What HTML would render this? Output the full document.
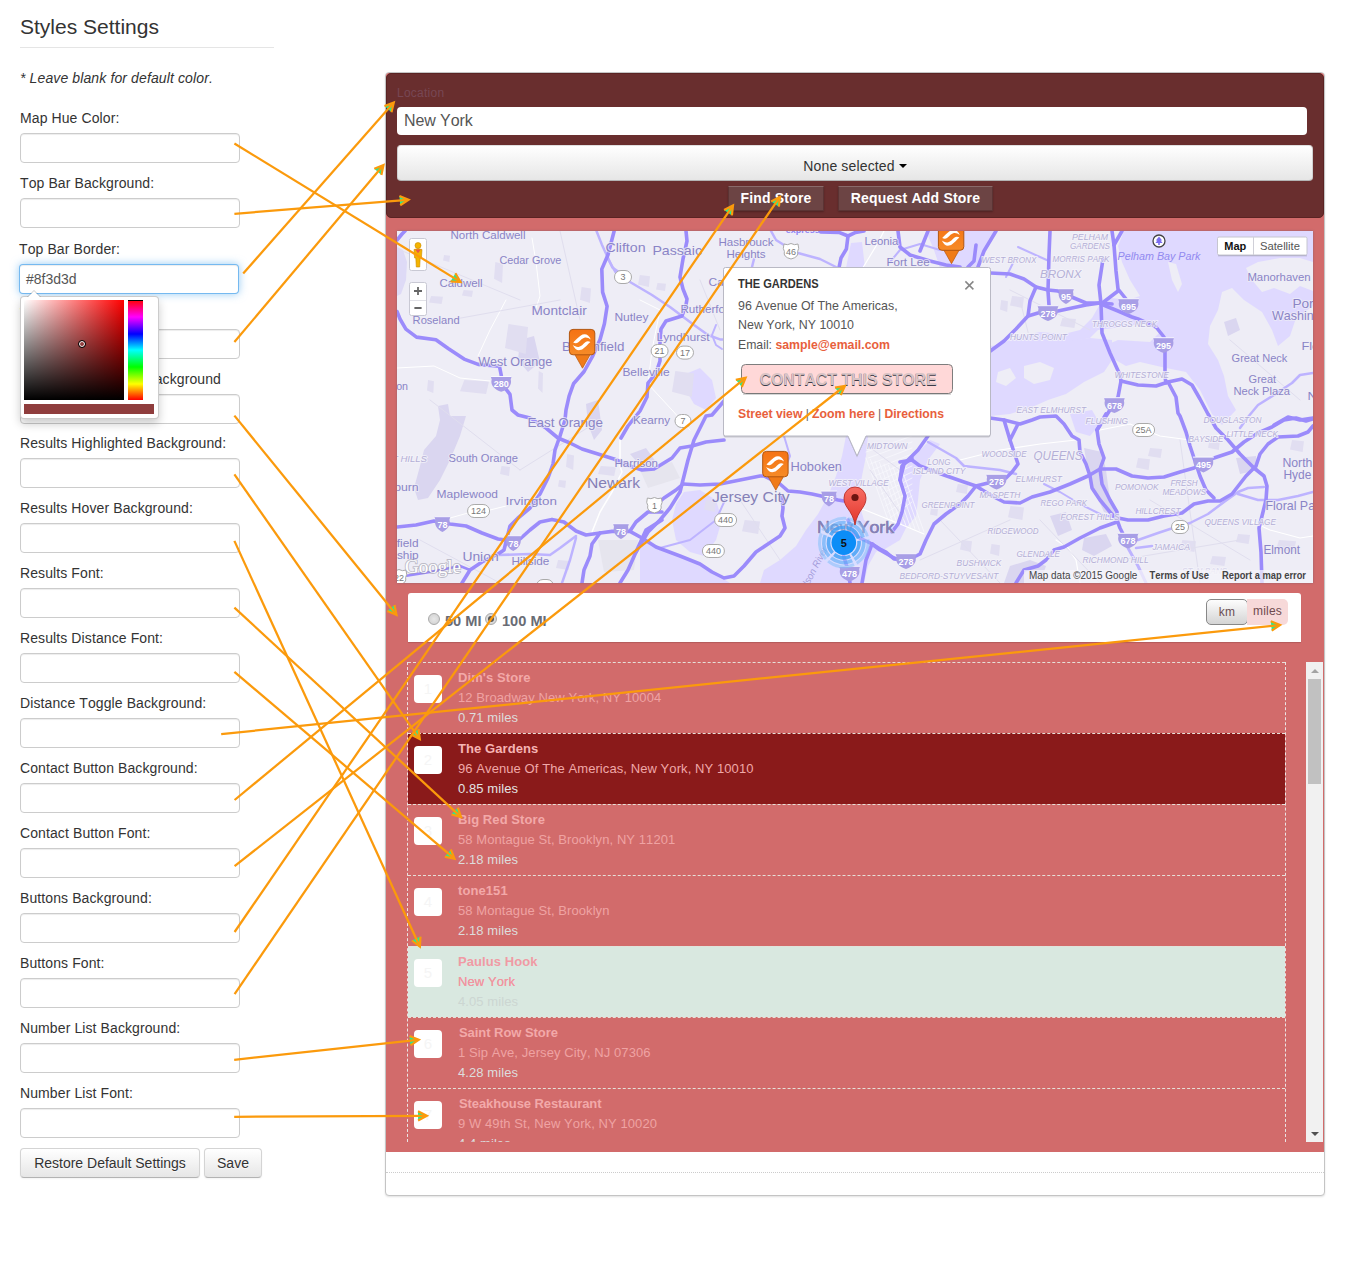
<!DOCTYPE html>
<html lang="en">
<head>
<meta charset="utf-8">
<title>Styles Settings</title>
<style>
*{box-sizing:border-box}
html,body{margin:0;padding:0;background:#fff}
body{font-kerning:none;width:1360px;height:1272px;position:relative;overflow:hidden;font-family:"Liberation Sans",Arial,sans-serif;font-size:14px;line-height:20px;color:#333}
.abs{position:absolute}
/* ---------- left form ---------- */
#form{position:absolute;left:20px;top:0;width:260px}
#form h1{position:absolute;left:0;top:7px;margin:0;width:254px;height:41px;font-size:21px;font-weight:normal;line-height:40px;color:#333;border-bottom:1px solid #e5e5e5}
#form .note{position:absolute;left:0;top:68px;font-style:italic;white-space:nowrap;letter-spacing:.12px}
.fl{letter-spacing:.1px;position:absolute;left:0;white-space:nowrap;height:20px;line-height:20px}
.fi{position:absolute;left:0;width:220px;height:30px;border:1px solid #ccc;border-radius:4px;background:#fff;box-shadow:inset 0 1px 1px rgba(0,0,0,.075);padding:4px 6px;color:#555;font-size:14px;line-height:20px}
.fi.focus{border-color:rgba(82,168,236,.8);box-shadow:inset 0 1px 1px rgba(0,0,0,.075),0 0 8px rgba(82,168,236,.6)}
.btn{position:absolute;height:30px;border:1px solid #ccc;border-color:#d4d4d4 #d4d4d4 #b3b3b3;border-radius:4px;background:linear-gradient(#fff,#e6e6e6);box-shadow:inset 0 1px 0 rgba(255,255,255,.2),0 1px 2px rgba(0,0,0,.05);color:#333;text-shadow:0 1px 1px rgba(255,255,255,.75);text-align:center;line-height:28px;font-size:14px;white-space:nowrap}
/* colour picker */
#cp{position:absolute;left:0;top:296px;width:139px;height:123px;background:#fff;border:1px solid rgba(0,0,0,.2);border-radius:4px;box-shadow:0 5px 10px rgba(0,0,0,.2)}
#cp:before{content:"";position:absolute;left:6px;top:-7px;border:7px solid transparent;border-top:0;border-bottom-color:rgba(0,0,0,.2)}
#cp:after{content:"";position:absolute;left:7px;top:-6px;border:6px solid transparent;border-top:0;border-bottom-color:#fff}
#cp .sat{position:absolute;left:3px;top:3px;width:100px;height:100px;background:linear-gradient(to top,#000,rgba(0,0,0,0)),linear-gradient(to right,#fff,#f00)}
#cp .sat i{position:absolute;left:53.5px;top:40px;width:8px;height:8px;border:1px solid #000;border-radius:50%;box-shadow:inset 0 0 0 1px #fff}
#cp .hue{position:absolute;left:107px;top:3px;width:15px;height:100px;background:linear-gradient(to bottom,#f00 0%,#f0f 17%,#00f 34%,#0ff 50%,#0f0 67%,#ff0 84%,#f00 100%)}
#cp .hue i{position:absolute;left:0;top:0;width:15px;height:1px;background:#000}
#cp .col{position:absolute;left:3px;top:107px;width:130px;height:10px;background:#8f3d3d}
</style>
</head>
<body>
<div id="form">
<h1>Styles Settings</h1>
<div class="note">* Leave blank for default color.</div>
<div class="fl" style="top:108px">Map Hue Color:</div>
<div class="fi" style="top:133px"></div>
<div class="fl" style="top:173px">Top Bar Background:</div>
<div class="fi" style="top:198px"></div>
<div class="fl" style="top:239px;left:-1px">Top Bar Border:</div>
<div class="fi focus" style="top:264px;left:-1px">#8f3d3d</div>
<div class="fl" style="top:303px">Top Bar Font:</div>
<div class="fi" style="top:328.5px"></div>
<div class="fl" style="top:368px;left:auto;right:59px;margin-top:1px">Results Container Background</div>
<div class="fi" style="top:393.5px"></div>
<div class="fl" style="top:433px">Results Highlighted Background:</div>
<div class="fi" style="top:458px"></div>
<div class="fl" style="top:498px">Results Hover Background:</div>
<div class="fi" style="top:523px"></div>
<div class="fl" style="top:563px">Results Font:</div>
<div class="fi" style="top:588px"></div>
<div class="fl" style="top:628px">Results Distance Font:</div>
<div class="fi" style="top:653px"></div>
<div class="fl" style="top:693px">Distance Toggle Background:</div>
<div class="fi" style="top:718px"></div>
<div class="fl" style="top:758px">Contact Button Background:</div>
<div class="fi" style="top:783px"></div>
<div class="fl" style="top:823px">Contact Button Font:</div>
<div class="fi" style="top:848px"></div>
<div class="fl" style="top:888px">Buttons Background:</div>
<div class="fi" style="top:913px"></div>
<div class="fl" style="top:953px">Buttons Font:</div>
<div class="fi" style="top:978px"></div>
<div class="fl" style="top:1018px">Number List Background:</div>
<div class="fi" style="top:1043px"></div>
<div class="fl" style="top:1083px">Number List Font:</div>
<div class="fi" style="top:1108px"></div>
<div id="cp"><div class="sat"><i></i></div><div class="hue"><i></i></div><div class="col"></div></div>
<div class="btn" style="left:0;top:1148px;width:180px">Restore Default Settings</div>
<div class="btn" style="left:184px;top:1148px;width:58px">Save</div>
</div>
<style>
#panel{position:absolute;left:385px;top:72px;width:940px;height:1124px;border:1px solid #c4c4c4;border-radius:4px;background:#fff;box-shadow:0 1px 2px rgba(0,0,0,.12)}
#pink{position:absolute;left:386px;top:73px;width:938px;height:1079px;background:#d26b6b;border-radius:3px 3px 0 0}
#dots{position:absolute;left:386px;top:1172px;width:938px;height:0;border-top:1px dotted #ccc}
#topbar{position:absolute;left:386px;top:73px;width:938px;height:145px;background:#692e2e;border:1px solid #5a2323;border-radius:5px}
#loc{position:absolute;left:397px;top:84px;font-size:12px;line-height:18px;color:#86607a;letter-spacing:.25px;opacity:.5}
#q{position:absolute;left:397px;top:107px;width:910px;height:28px;background:#fff;border-radius:4px;padding:0 0 0 7px;font-size:16px;line-height:27px;color:#555;letter-spacing:-.1px}
#sel{position:absolute;left:397px;top:145px;width:916px;height:36px;border-radius:4px;background:linear-gradient(#fff 0%,#f6f6f6 35%,#e6e6e6 100%);border:1px solid #ccc;border-color:#e0e0e0 #d0d0d0 #b3b3b3;text-align:center;font-size:14px;line-height:41px;color:#333;letter-spacing:.15px}
#sel i{display:inline-block;width:0;height:0;border:4px solid transparent;border-bottom:0;border-top-color:#000;vertical-align:middle;margin:0 0 2px 4px}
.tb{position:absolute;top:186px;height:25px;background:#6c4444;border:1px solid #5b3434;border-top-color:#8a6a6a;box-shadow:0 1px 2px rgba(0,0,0,.25);color:#fff;font-weight:bold;font-size:14px;line-height:23px;text-align:center;white-space:nowrap;letter-spacing:.2px;border-radius:1px}
#bar{position:absolute;left:408px;top:593px;width:893px;height:49px;background:#fff;border-radius:3px 3px 0 0;box-shadow:0 1px 1px rgba(0,0,0,.15)}
.rad{position:absolute;top:613px;width:12px;height:12px;border-radius:50%;border:1px solid #aaa;background:radial-gradient(#e8e8e8,#cfcfcf)}
.rad.on:after{content:"";position:absolute;left:2px;top:2px;width:6px;height:6px;border-radius:50%;background:#555}
.rl{position:absolute;top:610.5px;font-weight:bold;font-size:14.6px;line-height:20px;color:#696c75;white-space:nowrap;letter-spacing:0}
#km{position:absolute;left:1206px;top:599px;width:42px;height:26px;border:1px solid #888;border-radius:5px;background:linear-gradient(#fdfdfd,#d4d4d4);font-size:12px;line-height:25px;text-align:center;color:#6a4e52}
#mi{position:absolute;left:1247px;top:599px;width:41px;height:26px;border-radius:0 5px 5px 0;background:#f7d9d9;font-size:12px;line-height:25px;text-align:center;color:#6e4a4e}
#km,#mi{letter-spacing:.2px}
#list{position:absolute;left:407px;top:662px;width:879px;height:480px;border-left:1px dashed #ebe4e4;border-right:1px dashed #ebe4e4;overflow:hidden}
.row{position:relative;height:71px;border-top:1px dashed #e6dfd8;font-size:13px;line-height:20px;white-space:nowrap;letter-spacing:.08px}
.row b{position:absolute;left:50px;top:5px;color:#f2a9a9}
.row span{position:absolute;left:50px;top:25px;color:#efa3a3}
.row em{position:absolute;left:50px;top:45px;color:#ddd;font-style:normal}
.row i{position:absolute;left:6px;top:12px;width:28px;height:28px;border-radius:4px;background:#fff;color:#f5f5f5;font-style:normal;font-size:15px;line-height:28px;text-align:center}
.row.hl{background:#8a1a1a}
.row.hl b{color:#f6b4b4}.row.hl span{color:#f0a8a8}.row.hl em{color:#e4e4e4}
.row.hv{background:#d9e8e0}
.row.hv b{color:#f09aa4}.row.hv span{color:#f195a0;text-shadow:0 0 .5px #f195a0}.row.hv em{color:#ccd6d2}
#sb{position:absolute;left:1306px;top:662px;width:17px;height:480px;background:#f1f1f1}
#sb .th{position:absolute;left:2px;top:17px;width:13px;height:105px;background:#c1c1c1}
#sb .up{position:absolute;left:5px;top:7px;border:4px solid transparent;border-top:0;border-bottom:4px solid #a3a3a3}
#sb .dn{position:absolute;left:5px;bottom:6px;border:4px solid transparent;border-bottom:0;border-top:4px solid #505050}
</style>
<div id="panel"></div>
<div id="pink"></div>
<div id="dots"></div>
<div id="topbar"></div>
<div id="loc">Location</div>
<div id="q">New York</div>
<div id="sel">None selected<i></i></div>
<div class="tb" style="left:728px;width:96px">Find Store</div>
<div class="tb" style="left:838px;width:155px">Request Add Store</div>
<div id="bar"></div>
<div class="rad" style="left:428px"></div><div class="rl" style="left:445px">50 MI</div>
<div class="rad on" style="left:485px"></div><div class="rl" style="left:502px">100 MI</div>
<div id="km">km</div><div id="mi">miles</div>
<div id="list">
<div class="row"><i>1</i><b>Dim's Store</b><span>12 Broadway New York, NY 10004</span><em>0.71 miles</em></div>
<div class="row hl"><i>2</i><b>The Gardens</b><span>96 Avenue Of The Americas, New York, NY 10010</span><em>0.85 miles</em></div>
<div class="row"><i>3</i><b>Big Red Store</b><span>58 Montague St, Brooklyn, NY 11201</span><em>2.18 miles</em></div>
<div class="row"><i>4</i><b>tone151</b><span>58 Montague St, Brooklyn</span><em>2.18 miles</em></div>
<div class="row hv"><i>5</i><b>Paulus Hook</b><span>New York</span><em>4.05 miles</em></div>
<div class="row"><i>6</i><b style="left:51px;letter-spacing:-.05px">Saint Row Store</b><span>1 Sip Ave, Jersey City, NJ 07306</span><em>4.28 miles</em></div>
<div class="row"><i>7</i><b style="left:51px;letter-spacing:-.1px">Steakhouse Restaurant</b><span>9 W 49th St, New York, NY 10020</span><em>4.4 miles</em></div>
</div>
<div id="sb"><div class="up"></div><div class="th"></div><div class="dn"></div></div>
<svg id="map" style="position:absolute;left:397px;top:231px;box-shadow:0 0 2px rgba(90,90,110,.55)" width="916" height="352" viewBox="397 231 916 352" font-family="Liberation Sans, Arial, sans-serif">
<rect x="397" y="231" width="916" height="352" fill="#eeedf6"/>
<polygon points="438,406 448,404 450,416 466,416 460,436 450,460 440,480 428,498 418,500 414,488 420,466 424,450 436,436 440,420" fill="#dad6f0" />
<polygon points="397,247 403,250 407,262 406,280 401,294 397,296" fill="#dedaf6" />
<polygon points="926,231 996,231 986,250 978,268 940,268 934,250" fill="#dfd9ff" />
<polygon points="846,436 868,436 866,456 862,476 858,500 864,520 880,530 892,532 886,545 876,552 868,566 864,583 760,583 764,570 780,560 796,546 806,530 818,514 828,496 836,476 842,456" fill="#dfd9ff" />
<polygon points="684,492 700,490 716,500 722,520 716,540 704,556 690,552 676,540 672,520 676,504" fill="#dfd9ff" />
<polygon points="640,538 662,548 690,560 712,572 730,583 640,583" fill="#dfd9ff" />
<polygon points="688,373 700,368 712,380 716,398 706,410 694,404 686,390" fill="#dfd9ff" />
<polygon points="910,460 930,440 940,444 928,460 920,480 918,500 916,516 906,528 900,540 880,552 880,528 896,524 902,512 905,496 900,480" fill="#dfd9ff" />
<polygon points="990,354 1010,346 1030,344 1050,346 1070,342 1090,338 1098,330 1130,326 1146,322 1160,332 1150,342 1118,340 1104,346 1112,358 1126,366 1140,362 1166,368 1186,372 1200,390 1212,414 1222,425 1236,410 1228,396 1224,376 1218,360 1208,344 1210,326 1218,310 1222,292 1232,288 1244,300 1262,312 1272,330 1278,346 1290,336 1296,318 1313,306 1313,291 1300,286 1290,294 1274,288 1262,292 1252,280 1246,268 1258,262 1280,258 1300,258 1313,262 1313,231 1124,231 1118,246 1122,262 1130,280 1140,296 1128,300 1112,298 1100,304 1092,318 1080,330 1064,334 1040,332 1020,336 1000,344 990,348" fill="#dfd9ff" />
<polygon points="990,346 1010,344 1040,344 1060,342 1090,338 1112,340 1112,360 1104,372 1084,382 1066,394 1048,400 1030,408 1010,414 990,416" fill="#dfd9ff" />
<polygon points="1024,366 1040,362 1054,368 1050,380 1034,384 1024,378" fill="#eeedf6" />
<polygon points="998,372 1010,368 1016,378 1006,386 996,382" fill="#eeedf6" />
<polygon points="1168,262 1176,264 1182,284 1178,292 1172,280" fill="#eeedf6" />
<polygon points="1070,414 1092,410 1100,424 1090,436 1076,432" fill="#dfd9ff" />
<polygon points="1084,448 1102,452 1106,470 1110,500 1116,516 1104,512 1094,490 1088,470" fill="#dad6f0" />
<polygon points="1010,566 1030,560 1046,566 1040,583 1004,583" fill="#dad6f0" />
<polygon points="1084,538 1106,534 1112,546 1094,556 1082,550" fill="#dad6f0" />
<polygon points="1050,516 1066,512 1072,530 1058,536" fill="#dad6f0" />
<polygon points="630,454 646,448 656,462 644,470" fill="#dad6f0" />
<polygon points="586,404 598,400 602,430 594,440 588,424" fill="#dad6f0" />
<polygon points="1236,458 1256,456 1258,470 1240,474" fill="#dad6f0" />
<polygon points="1224,322 1236,318 1240,330 1228,336" fill="#dad6f0" />
<polygon points="520,340 534,336 540,362 528,372 518,360" fill="#dad6f0" />
<polygon points="851,243 862,242 865,268 846,268" fill="#dfd9ff" />
<polygon points="495.35,262 503,264.1 502.1,283 494,278.8" fill="#e1def1" />
<polygon points="508.45,324 528,327.0 525.7,354 505,348.0" fill="#e1def1" />
<polygon points="431.1,296 443,296.8 441.6,304 429,302.4" fill="#e1def1" />
<polygon points="463.65,290 473,290.7 471.9,297 462,295.6" fill="#e1def1" />
<polygon points="581.65,287 591,288.6 589.9,303 580,299.8" fill="#e1def1" />
<polygon points="538.75,371 543,373.2 542.5,393 538,388.6" fill="#e1def1" />
<polygon points="444.05,255 450,255.7 449.3,262 443,260.6" fill="#e1def1" />
<polygon points="428.05,380 434,381.3 433.3,393 427,390.4" fill="#e1def1" />
<polygon points="464.35,380 489,381.4 486.1,394 460,391.2" fill="#e1def1" />
<polygon points="639.8,275 650,276.2 648.8,287 638,284.6" fill="#e1def1" />
<polygon points="657.5,283 666,283.8 665.0,291 656,289.4" fill="#e1def1" />
<polygon points="675.3,371 694,373.6 691.8,397 672,391.8" fill="#e1def1" />
<polygon points="567.2,454 574,455.6 573.2,470 566,466.8" fill="#e1def1" />
<polygon points="600.7,466 616,467.0 614.2,476 598,474.0" fill="#e1def1" />
<polygon points="559.2,480 566,480.8 565.2,488 558,486.4" fill="#e1def1" />
<polygon points="501.5,466 510,467.0 509.0,476 500,474.0" fill="#e1def1" />
<polygon points="558.1,560 570,561.0 568.6,570 556,568.0" fill="#e1def1" />
<polygon points="1010.4,506 1024,507.4 1022.4,520 1008,517.2" fill="#e1def1" />
<polygon points="957.8,484 968,485.0 966.8,494 956,492.0" fill="#e1def1" />
<polygon points="931.2,508 938,508.8 937.2,516 930,514.4" fill="#e1def1" />
<polygon points="1150.1,448 1162,449.0 1160.6,458 1148,456.0" fill="#e1def1" />
<polygon points="1138.1,458 1150,459.2 1148.6,470 1136,467.6" fill="#e1def1" />
<polygon points="1209.8,439 1220,440.1 1218.8,450 1208,447.8" fill="#e1def1" />
<polygon points="1279.0,540 1296,541.2 1294.0,552 1276,549.6" fill="#e1def1" />
<polygon points="1238.1,534 1250,535.0 1248.6,544 1236,542.0" fill="#e1def1" />
<polygon points="1012.1,296 1024,297.2 1022.6,308 1010,305.6" fill="#e1def1" />
<polygon points="1062.4,318 1076,319.0 1074.4,328 1060,326.0" fill="#e1def1" />
<polygon points="1001.2,300 1008,301.2 1007.2,312 1000,309.6" fill="#e1def1" />
<polygon points="1292.1,440 1304,441.2 1302.6,452 1290,449.6" fill="#e1def1" />
<polygon points="1182.4,540 1196,541.2 1194.4,552 1180,549.6" fill="#e1def1" />
<polygon points="1212.4,556 1226,557.0 1224.4,566 1210,564.0" fill="#e1def1" />
<polygon points="961.8,540 972,541.2 970.8,552 960,549.6" fill="#e1def1" />
<polygon points="991.5,544 1000,545.2 999.0,556 990,553.6" fill="#e1def1" />
<polygon points="705.8,500 716,501.2 714.8,512 704,509.6" fill="#e1def1" />
<polygon points="744.7,520 760,521.4 758.2,534 742,531.2" fill="#e1def1" />
<polygon points="598,540 638,540 634,570 604,572" fill="#e6e5ee" />
<polygon points="640,470 672,462 680,478 648,488" fill="#e6e5ee" />
<polyline points="866.0,458.0 888.0,520.0" fill="none" stroke="#f8f8fc" stroke-width="0.8" stroke-linejoin="round" stroke-linecap="round" />
<polyline points="870.5,459.5 892.5,521.5" fill="none" stroke="#f8f8fc" stroke-width="0.8" stroke-linejoin="round" stroke-linecap="round" />
<polyline points="875.0,461.0 897.0,523.0" fill="none" stroke="#f8f8fc" stroke-width="0.8" stroke-linejoin="round" stroke-linecap="round" />
<polyline points="879.5,462.5 901.5,524.5" fill="none" stroke="#f8f8fc" stroke-width="0.8" stroke-linejoin="round" stroke-linecap="round" />
<polyline points="884.0,464.0 906.0,526.0" fill="none" stroke="#f8f8fc" stroke-width="0.8" stroke-linejoin="round" stroke-linecap="round" />
<polyline points="888.5,465.5 910.5,527.5" fill="none" stroke="#f8f8fc" stroke-width="0.8" stroke-linejoin="round" stroke-linecap="round" />
<polyline points="893.0,467.0 915.0,529.0" fill="none" stroke="#f8f8fc" stroke-width="0.8" stroke-linejoin="round" stroke-linecap="round" />
<polyline points="897.5,468.5 919.5,530.5" fill="none" stroke="#f8f8fc" stroke-width="0.8" stroke-linejoin="round" stroke-linecap="round" />
<polyline points="902.0,470.0 924.0,532.0" fill="none" stroke="#f8f8fc" stroke-width="0.8" stroke-linejoin="round" stroke-linecap="round" />
<polyline points="866.0,452 912,436" fill="none" stroke="#f8f8fc" stroke-width="0.8" stroke-linejoin="round" stroke-linecap="round" />
<polyline points="868.16,458 912,442" fill="none" stroke="#f8f8fc" stroke-width="0.8" stroke-linejoin="round" stroke-linecap="round" />
<polyline points="870.32,464 912,448" fill="none" stroke="#f8f8fc" stroke-width="0.8" stroke-linejoin="round" stroke-linecap="round" />
<polyline points="872.48,470 912,454" fill="none" stroke="#f8f8fc" stroke-width="0.8" stroke-linejoin="round" stroke-linecap="round" />
<polyline points="874.64,476 912,460" fill="none" stroke="#f8f8fc" stroke-width="0.8" stroke-linejoin="round" stroke-linecap="round" />
<polyline points="876.8,482 912,466" fill="none" stroke="#f8f8fc" stroke-width="0.8" stroke-linejoin="round" stroke-linecap="round" />
<polyline points="878.96,488 912,472" fill="none" stroke="#f8f8fc" stroke-width="0.8" stroke-linejoin="round" stroke-linecap="round" />
<polyline points="881.12,494 912,478" fill="none" stroke="#f8f8fc" stroke-width="0.8" stroke-linejoin="round" stroke-linecap="round" />
<polyline points="883.28,500 912,484" fill="none" stroke="#f8f8fc" stroke-width="0.8" stroke-linejoin="round" stroke-linecap="round" />
<polyline points="885.44,506 912,490" fill="none" stroke="#f8f8fc" stroke-width="0.8" stroke-linejoin="round" stroke-linecap="round" />
<polyline points="887.6,512 912,496" fill="none" stroke="#f8f8fc" stroke-width="0.8" stroke-linejoin="round" stroke-linecap="round" />
<polyline points="889.76,518 912,502" fill="none" stroke="#f8f8fc" stroke-width="0.8" stroke-linejoin="round" stroke-linecap="round" />
<polyline points="532,238 536,262 540,296 534,314" fill="none" stroke="#ffffff" stroke-width="1" stroke-linejoin="round" stroke-linecap="round" />
<polyline points="506,300 490,330 478,356" fill="none" stroke="#ffffff" stroke-width="1" stroke-linejoin="round" stroke-linecap="round" />
<polyline points="397,368 434,366 460,378 490,381" fill="none" stroke="#ffffff" stroke-width="1" stroke-linejoin="round" stroke-linecap="round" />
<polyline points="450,518 468,513 490,510 506,506" fill="none" stroke="#ffffff" stroke-width="1" stroke-linejoin="round" stroke-linecap="round" />
<polyline points="620,440 620,466 622,472 612,492 600,512 592,532" fill="none" stroke="#ffffff" stroke-width="1.5" stroke-linejoin="round" stroke-linecap="round" />
<polyline points="640,300 660,310 652,350 648,384 672,410 690,430" fill="none" stroke="#ffffff" stroke-width="1" stroke-linejoin="round" stroke-linecap="round" />
<polyline points="1056,540 1068,548 1076,560 1080,583" fill="none" stroke="#ffffff" stroke-width="1.2" stroke-linejoin="round" stroke-linecap="round" />
<polyline points="1100,430 1130,424 1160,436 1190,440 1240,432" fill="none" stroke="#ffffff" stroke-width="1.2" stroke-linejoin="round" stroke-linecap="round" />
<polyline points="1248,520 1270,530 1300,538 1313,536" fill="none" stroke="#ffffff" stroke-width="1.2" stroke-linejoin="round" stroke-linecap="round" />
<polyline points="960,460 1000,450 1040,444 1076,440" fill="none" stroke="#ffffff" stroke-width="1.2" stroke-linejoin="round" stroke-linecap="round" />
<polyline points="860,508 880,516 900,524 924,534" fill="none" stroke="#ffffff" stroke-width="1.2" stroke-linejoin="round" stroke-linecap="round" />
<polyline points="400,250 520,300" fill="none" stroke="#e0deee" stroke-width="1" stroke-linejoin="round" stroke-linecap="round" />
<polyline points="430,400 520,470" fill="none" stroke="#e0deee" stroke-width="1" stroke-linejoin="round" stroke-linecap="round" />
<polyline points="520,470 600,420" fill="none" stroke="#e0deee" stroke-width="1" stroke-linejoin="round" stroke-linecap="round" />
<polyline points="700,280 720,330" fill="none" stroke="#e0deee" stroke-width="1" stroke-linejoin="round" stroke-linecap="round" />
<polyline points="1010,290 1090,330" fill="none" stroke="#e0deee" stroke-width="1" stroke-linejoin="round" stroke-linecap="round" />
<polyline points="920,560 1010,520" fill="none" stroke="#e0deee" stroke-width="1" stroke-linejoin="round" stroke-linecap="round" />
<polyline points="1120,560 1240,540" fill="none" stroke="#e0deee" stroke-width="1" stroke-linejoin="round" stroke-linecap="round" />
<polyline points="1150,500 1250,560" fill="none" stroke="#e0deee" stroke-width="1" stroke-linejoin="round" stroke-linecap="round" />
<polyline points="1180,440 1200,583" fill="none" stroke="#e0deee" stroke-width="1" stroke-linejoin="round" stroke-linecap="round" />
<polyline points="1040,520 1100,583" fill="none" stroke="#e0deee" stroke-width="1" stroke-linejoin="round" stroke-linecap="round" />
<polyline points="940,520 1000,583" fill="none" stroke="#e0deee" stroke-width="1" stroke-linejoin="round" stroke-linecap="round" />
<polyline points="860,440 900,470" fill="none" stroke="#e0deee" stroke-width="1" stroke-linejoin="round" stroke-linecap="round" />
<polyline points="870,470 905,520" fill="none" stroke="#e0deee" stroke-width="1" stroke-linejoin="round" stroke-linecap="round" />
<polyline points="560,231 580,320" fill="none" stroke="#e0deee" stroke-width="1" stroke-linejoin="round" stroke-linecap="round" />
<polyline points="450,320 560,300" fill="none" stroke="#e0deee" stroke-width="1" stroke-linejoin="round" stroke-linecap="round" />
<polyline points="420,540 500,583" fill="none" stroke="#e0deee" stroke-width="1" stroke-linejoin="round" stroke-linecap="round" />
<polyline points="740,500 780,560" fill="none" stroke="#e0deee" stroke-width="1" stroke-linejoin="round" stroke-linecap="round" />
<polyline points="1230,340 1300,400" fill="none" stroke="#e0deee" stroke-width="1" stroke-linejoin="round" stroke-linecap="round" />
<polyline points="1020,300 1030,340" fill="none" stroke="#e0deee" stroke-width="1" stroke-linejoin="round" stroke-linecap="round" />
<polyline points="596.5,231 601.8,244.4 612.4,267.4 619.4,272.6" fill="none" stroke="#bdb3ff" stroke-width="2.5" stroke-linejoin="round" stroke-linecap="round" />
<polyline points="608,259 616,273 630,282 652,295 670,307 682,316 694,325 708,335 720,339.4 724,339.4" fill="none" stroke="#bdb3ff" stroke-width="2.5" stroke-linejoin="round" stroke-linecap="round" />
<polyline points="798,253 820,259 836,267" fill="none" stroke="#bdb3ff" stroke-width="2.5" stroke-linejoin="round" stroke-linecap="round" />
<polyline points="754,259 752,267" fill="none" stroke="#bdb3ff" stroke-width="2.5" stroke-linejoin="round" stroke-linecap="round" />
<polyline points="498,555 530,554 550,555 560,548 576,536" fill="none" stroke="#bdb3ff" stroke-width="2.5" stroke-linejoin="round" stroke-linecap="round" />
<polyline points="576,538 570,560 562,583" fill="none" stroke="#bdb3ff" stroke-width="2.5" stroke-linejoin="round" stroke-linecap="round" />
<polyline points="405,576 430,572 460,566 470,570" fill="none" stroke="#9b8bfb" stroke-width="2.5" stroke-linejoin="round" stroke-linecap="round" />
<polyline points="1313,373 1300,375 1292,383 1274,395 1258,405 1248,417 1240,428" fill="none" stroke="#bdb3ff" stroke-width="2.5" stroke-linejoin="round" stroke-linecap="round" />
<polyline points="1138,540 1158,533 1170,529 1190,523 1208,514 1224,502 1238,492 1248,488 1264,487" fill="none" stroke="#bdb3ff" stroke-width="2.5" stroke-linejoin="round" stroke-linecap="round" />
<polyline points="1238,494 1258,500 1278,500 1298,496 1313,492" fill="none" stroke="#bdb3ff" stroke-width="2.5" stroke-linejoin="round" stroke-linecap="round" />
<polyline points="1128,548 1138,566 1146,583" fill="none" stroke="#bdb3ff" stroke-width="3" stroke-linejoin="round" stroke-linecap="round" />
<polyline points="928,442 956,458 964,466 1000,470 1016,474" fill="none" stroke="#bdb3ff" stroke-width="2.5" stroke-linejoin="round" stroke-linecap="round" />
<polyline points="1044,484 1060,492 1080,504 1100,514 1116,518" fill="none" stroke="#bdb3ff" stroke-width="2" stroke-linejoin="round" stroke-linecap="round" />
<polyline points="1136,548 1152,546" fill="none" stroke="#bdb3ff" stroke-width="2.5" stroke-linejoin="round" stroke-linecap="round" />
<polyline points="890,262 900,250 920,244 940,250" fill="none" stroke="#bdb3ff" stroke-width="2" stroke-linejoin="round" stroke-linecap="round" />
<polyline points="1018,247 1040,257 1049,261" fill="none" stroke="#bdb3ff" stroke-width="2" stroke-linejoin="round" stroke-linecap="round" />
<polyline points="1014,261 1006,277" fill="none" stroke="#bdb3ff" stroke-width="2" stroke-linejoin="round" stroke-linecap="round" />
<polyline points="784,470 790,456 784,436" fill="none" stroke="#bdb3ff" stroke-width="2" stroke-linejoin="round" stroke-linecap="round" />
<polyline points="660,548 690,540 716,520 725,500" fill="none" stroke="#bdb3ff" stroke-width="2" stroke-linejoin="round" stroke-linecap="round" />
<polyline points="716,325 712,335 716,345 722,349" fill="none" stroke="#bdb3ff" stroke-width="2" stroke-linejoin="round" stroke-linecap="round" />
<polyline points="397,311.5 400,319 405.9,329.1 416.5,337.1 435.9,339.7 448.2,348.5 464.1,359.1 478.2,364.4 499.4,366.2 501.2,375 502,383.8 510,394.4 512,410 518,415 530,418 546,428 558,438 570,443 582,449 598,454 614,459 630,466 642,470 654,469 672,458 680,448 692,446 706,442 724,440" fill="none" stroke="#9b8bfb" stroke-width="3.6" stroke-linejoin="round" stroke-linecap="round" />
<polyline points="614.1,231.2 607.9,255 601.8,269.1 602.6,292.1 607.1,306.2 604.4,323.8 600,339.7 592.9,355.6 584.1,371.5 573.5,383.8 569.1,396.2 566,410 565,420 560,436 555,450 553,464 548,478 540,494 530,508 518,518 510,526 507,538 504,550 498,554 482,562 470,570 462,583" fill="none" stroke="#9b8bfb" stroke-width="3.6" stroke-linejoin="round" stroke-linecap="round" />
<polyline points="686,231 687,241 683,259 680,277 683,289 687,299 686,305 682,316 666,321 661,329 660,341 660,361 656,373 648,383 647,397 640,411 628,426 621,438" fill="none" stroke="#9b8bfb" stroke-width="3.6" stroke-linejoin="round" stroke-linecap="round" />
<polyline points="771,231 776,240 784,245 790,247" fill="none" stroke="#bdb3ff" stroke-width="2.5" stroke-linejoin="round" stroke-linecap="round" />
<polyline points="820.7,232 839,232.4 848,236 855.6,232.4 864,231" fill="none" stroke="#9b8bfb" stroke-width="3.6" stroke-linejoin="round" stroke-linecap="round" />
<polyline points="848,236 846.4,249 841,258 839,267.6" fill="none" stroke="#9b8bfb" stroke-width="3.6" stroke-linejoin="round" stroke-linecap="round" />
<polyline points="724,401 712,415 706,416 694,440 688,460 683,480 680,492 670,508 660,520 648,532 636,552 628,570 620,583" fill="none" stroke="#9b8bfb" stroke-width="3.6" stroke-linejoin="round" stroke-linecap="round" />
<polyline points="397,527 416,525 434,521 450,524 466,526 482,533 498,539 506,540 520,539 530,530 540,522 552,519.4 564,522 576,531 586,535 600,533 612,531.4 630,531.4 642,538 656,547 680,556 700,564 712,572 724,578 734,576 744,566 756,552 768,544 780,536 785,528 782,516 783,508 782,496" fill="none" stroke="#9b8bfb" stroke-width="3.6" stroke-linejoin="round" stroke-linecap="round" />
<polyline points="683,484 700,485 720,484 740,480 760,476 764,476 780,484 788,491 800,492 812,494 821,496 838,500 844,501" fill="none" stroke="#9b8bfb" stroke-width="3.6" stroke-linejoin="round" stroke-linecap="round" />
<polyline points="662,512 648,512 636,522 630,531" fill="none" stroke="#9b8bfb" stroke-width="3.6" stroke-linejoin="round" stroke-linecap="round" />
<polyline points="662,520 646,530 636,552" fill="none" stroke="#9b8bfb" stroke-width="3.6" stroke-linejoin="round" stroke-linecap="round" />
<polyline points="600,533 592,544 590,556 584,570 582,583" fill="none" stroke="#9b8bfb" stroke-width="3.6" stroke-linejoin="round" stroke-linecap="round" />
<polyline points="656,505 664,498 676,490 683,484" fill="none" stroke="#9b8bfb" stroke-width="3.6" stroke-linejoin="round" stroke-linecap="round" />
<polyline points="863,267.6 870,256 877.6,243.4 884,231" fill="none" stroke="#ffffff" stroke-width="1.2" stroke-linejoin="round" stroke-linecap="round" />
<polyline points="898,231 900,247 910,255 930,261 946,265 960,267" fill="none" stroke="#9b8bfb" stroke-width="3.6" stroke-linejoin="round" stroke-linecap="round" />
<polyline points="928,231 920,251" fill="none" stroke="#9b8bfb" stroke-width="3.6" stroke-linejoin="round" stroke-linecap="round" />
<polyline points="976,245 974,261 968,267" fill="none" stroke="#9b8bfb" stroke-width="3.6" stroke-linejoin="round" stroke-linecap="round" />
<polyline points="996,231 984,251 978,267" fill="none" stroke="#9b8bfb" stroke-width="3.6" stroke-linejoin="round" stroke-linecap="round" />
<polyline points="990.4,273 1010,274 1024,279 1036,287 1048,290 1058,291 1074,298 1086,303 1100,303 1112,304" fill="none" stroke="#9b8bfb" stroke-width="3.6" stroke-linejoin="round" stroke-linecap="round" />
<polyline points="990.4,351 1004,341 1016,329 1028,316 1038,313 1058,311 1086,305 1100,303" fill="none" stroke="#9b8bfb" stroke-width="3.6" stroke-linejoin="round" stroke-linecap="round" />
<polyline points="1050,231 1049,255 1048,291 1049,305" fill="none" stroke="#9b8bfb" stroke-width="3.6" stroke-linejoin="round" stroke-linecap="round" />
<polyline points="1036,287 1030,301 1028,316" fill="none" stroke="#9b8bfb" stroke-width="3.6" stroke-linejoin="round" stroke-linecap="round" />
<polyline points="1112,231 1114,245 1116,271 1118,289 1126,299" fill="none" stroke="#9b8bfb" stroke-width="3.6" stroke-linejoin="round" stroke-linecap="round" />
<polyline points="1122,231 1114,245" fill="none" stroke="#9b8bfb" stroke-width="3.6" stroke-linejoin="round" stroke-linecap="round" />
<polyline points="1103,259 1099,285 1101,304 1102,333 1110,353 1120,375 1121,381 1118,397 1108,413 1097,430" fill="none" stroke="#9b8bfb" stroke-width="3.6" stroke-linejoin="round" stroke-linecap="round" />
<polyline points="1101,304 1118,291" fill="none" stroke="#9b8bfb" stroke-width="3.6" stroke-linejoin="round" stroke-linecap="round" />
<polyline points="1101,304 1118,311 1132,317 1138,319 1156,327 1164,337 1165,351 1165,377 1166,383" fill="none" stroke="#9b8bfb" stroke-width="3.6" stroke-linejoin="round" stroke-linecap="round" />
<polyline points="1121,381 1138,385 1156,386 1168,382 1182,379 1192,385 1200,399 1208,414 1216,428 1228,440 1240,454 1254,468 1264,476 1267,486 1266,500 1262,516 1259,528 1261,552 1262,583" fill="none" stroke="#9b8bfb" stroke-width="3.6" stroke-linejoin="round" stroke-linecap="round" />
<polyline points="1168,382 1176,397 1178,413 1180,416 1186,432 1190,446 1194,458 1200,476 1206,490 1214,498" fill="none" stroke="#9b8bfb" stroke-width="3.6" stroke-linejoin="round" stroke-linecap="round" />
<polyline points="990,418 1004,420 1020,424 1032,420 1040,417 1056,416 1064,424 1072,436 1079,440 1080,452 1086,464 1090,476 1092,488 1100,500 1110,512 1117,520 1120,528 1126,540" fill="none" stroke="#9b8bfb" stroke-width="3.6" stroke-linejoin="round" stroke-linecap="round" />
<polyline points="1004,420 1010,440 1018,424" fill="none" stroke="#9b8bfb" stroke-width="3.6" stroke-linejoin="round" stroke-linecap="round" />
<polyline points="1010,440 1014,452 1018,464 1012,472 1006,478 988,483 976,486 968,496 960,504 946,514 934,524 926,540 920,554 908,560 894,559 886,552 880,549 872,544" fill="none" stroke="#9b8bfb" stroke-width="3.6" stroke-linejoin="round" stroke-linecap="round" />
<polyline points="900,462 912,460 920,466 944,475 964,482 976,486 992,496 1004,502 1020,503 1032,497 1050,492 1070,484 1088,476 1100,469 1116,469 1132,476 1148,478 1164,477 1180,472 1194,468 1214,458 1232,452 1244,442 1258,433 1272,427 1284,420 1296,418 1306,421 1313,419" fill="none" stroke="#9b8bfb" stroke-width="3.6" stroke-linejoin="round" stroke-linecap="round" />
<polyline points="928,436 918,450 908,460 902,466 900,480 905,496 902,512 898,524 892,532" fill="none" stroke="#9b8bfb" stroke-width="3.6" stroke-linejoin="round" stroke-linecap="round" />
<polyline points="1097,430 1099,444 1104,458 1100,469 1102,484 1110,500 1117,512 1117,520" fill="none" stroke="#9b8bfb" stroke-width="3.6" stroke-linejoin="round" stroke-linecap="round" />
<polyline points="1117,522 1100,528 1080,538 1064,547 1054,550 1046,560 1038,566 1024,570 1016,583" fill="none" stroke="#9b8bfb" stroke-width="3.6" stroke-linejoin="round" stroke-linecap="round" />
<polyline points="1118,518 1128,520 1148,520 1164,516 1182,513 1194,504 1208,501 1220,501 1232,494 1246,476 1256,466 1260,454 1268,444 1278,437 1298,436 1308,432 1313,426" fill="none" stroke="#9b8bfb" stroke-width="3.6" stroke-linejoin="round" stroke-linecap="round" />
<polyline points="1274,425 1288,417 1300,420 1313,418" fill="none" stroke="#9b8bfb" stroke-width="3.6" stroke-linejoin="round" stroke-linecap="round" />
<polyline points="1106,414 1097,430" fill="none" stroke="#9b8bfb" stroke-width="3.6" stroke-linejoin="round" stroke-linecap="round" />
<polyline points="843.6,556 848,570 850,583" fill="none" stroke="#9b8bfb" stroke-width="3.6" stroke-linejoin="round" stroke-linecap="round" />
<polyline points="860,538 872,544 880,550 894,558 900,560" fill="none" stroke="#9b8bfb" stroke-width="3.6" stroke-linejoin="round" stroke-linecap="round" />
<polyline points="872,544 866,560 862,583" fill="none" stroke="#9b8bfb" stroke-width="3.6" stroke-linejoin="round" stroke-linecap="round" />
<polyline points="912,458 904,464 900,480" fill="none" stroke="#9b8bfb" stroke-width="3.6" stroke-linejoin="round" stroke-linecap="round" />
<polyline points="848,520 854,534 860,538" fill="none" stroke="#9b8bfb" stroke-width="3.6" stroke-linejoin="round" stroke-linecap="round" />
<polyline points="397,240 402,234 405,231" fill="none" stroke="#9b8bfb" stroke-width="3.6" stroke-linejoin="round" stroke-linecap="round" />
<text x="450.5" y="239" font-size="11" textLength="75" lengthAdjust="spacingAndGlyphs" fill="#8a84c6" stroke="#eeedf6" stroke-opacity=".75" stroke-width="2" paint-order="stroke" stroke-linejoin="round" >North Caldwell</text>
<text x="499.4" y="263.8" font-size="11" textLength="62" lengthAdjust="spacingAndGlyphs" fill="#8a84c6" stroke="#eeedf6" stroke-opacity=".75" stroke-width="2" paint-order="stroke" stroke-linejoin="round" >Cedar Grove</text>
<text x="439.4" y="286.8" font-size="11" textLength="43.2" lengthAdjust="spacingAndGlyphs" fill="#8a84c6" stroke="#eeedf6" stroke-opacity=".75" stroke-width="2" paint-order="stroke" stroke-linejoin="round" >Caldwell</text>
<text x="412.6" y="323.8" font-size="11" textLength="47" lengthAdjust="spacingAndGlyphs" fill="#8a84c6" stroke="#eeedf6" stroke-opacity=".75" stroke-width="2" paint-order="stroke" stroke-linejoin="round" >Roseland</text>
<text x="531.5" y="314.5" font-size="13" textLength="55.2" lengthAdjust="spacingAndGlyphs" fill="#8a84c6" stroke="#eeedf6" stroke-opacity=".75" stroke-width="2" paint-order="stroke" stroke-linejoin="round" >Montclair</text>
<text x="478.2" y="366.2" font-size="13" textLength="74" lengthAdjust="spacingAndGlyphs" fill="#8a84c6" stroke="#eeedf6" stroke-opacity=".75" stroke-width="2" paint-order="stroke" stroke-linejoin="round" >West Orange</text>
<text x="605.4" y="251.6" font-size="13" textLength="40.2" lengthAdjust="spacingAndGlyphs" fill="#8a84c6" stroke="#eeedf6" stroke-opacity=".75" stroke-width="2" paint-order="stroke" stroke-linejoin="round" >Clifton</text>
<text x="652.4" y="255" font-size="13" textLength="49.6" lengthAdjust="spacingAndGlyphs" fill="#8a84c6" stroke="#eeedf6" stroke-opacity=".75" stroke-width="2" paint-order="stroke" stroke-linejoin="round" >Passaic</text>
<text x="718.4" y="246" font-size="11" textLength="55.2" lengthAdjust="spacingAndGlyphs" fill="#8a84c6" stroke="#eeedf6" stroke-opacity=".75" stroke-width="2" paint-order="stroke" stroke-linejoin="round" >Hasbrouck</text>
<text x="726.4" y="258" font-size="11" textLength="39.2" lengthAdjust="spacingAndGlyphs" fill="#8a84c6" stroke="#eeedf6" stroke-opacity=".75" stroke-width="2" paint-order="stroke" stroke-linejoin="round" >Heights</text>
<text x="614.4" y="321" font-size="11" textLength="34" lengthAdjust="spacingAndGlyphs" fill="#8a84c6" stroke="#eeedf6" stroke-opacity=".75" stroke-width="2" paint-order="stroke" stroke-linejoin="round" >Nutley</text>
<text x="680.4" y="313" font-size="11" textLength="55" lengthAdjust="spacingAndGlyphs" fill="#8a84c6" stroke="#eeedf6" stroke-opacity=".75" stroke-width="2" paint-order="stroke" stroke-linejoin="round" >Rutherford</text>
<text x="656.6" y="341" font-size="11" textLength="53" lengthAdjust="spacingAndGlyphs" fill="#8a84c6" stroke="#eeedf6" stroke-opacity=".75" stroke-width="2" paint-order="stroke" stroke-linejoin="round" >Lyndhurst</text>
<text x="622.4" y="376" font-size="11" textLength="47.2" lengthAdjust="spacingAndGlyphs" fill="#8a84c6" stroke="#eeedf6" stroke-opacity=".75" stroke-width="2" paint-order="stroke" stroke-linejoin="round" >Belleville</text>
<text x="633" y="424" font-size="11" textLength="37" lengthAdjust="spacingAndGlyphs" fill="#8a84c6" stroke="#eeedf6" stroke-opacity=".75" stroke-width="2" paint-order="stroke" stroke-linejoin="round" >Kearny</text>
<text x="708.6" y="286" font-size="11" textLength="48" lengthAdjust="spacingAndGlyphs" fill="#8a84c6" stroke="#eeedf6" stroke-opacity=".75" stroke-width="2" paint-order="stroke" stroke-linejoin="round" >Carlstadt</text>
<text x="562" y="351.2" font-size="13" textLength="62.4" lengthAdjust="spacingAndGlyphs" fill="#8a84c6" stroke="#eeedf6" stroke-opacity=".75" stroke-width="2" paint-order="stroke" stroke-linejoin="round" >Bloomfield</text>
<text x="864.4" y="245" font-size="11" textLength="34" lengthAdjust="spacingAndGlyphs" fill="#8a84c6" stroke="#eeedf6" stroke-opacity=".75" stroke-width="2" paint-order="stroke" stroke-linejoin="round" >Leonia</text>
<text x="886.4" y="266" font-size="11" textLength="43.2" lengthAdjust="spacingAndGlyphs" fill="#8a84c6" stroke="#eeedf6" stroke-opacity=".75" stroke-width="2" paint-order="stroke" stroke-linejoin="round" >Fort Lee</text>
<text x="527.6" y="427.4" font-size="13" textLength="75.4" lengthAdjust="spacingAndGlyphs" fill="#8a84c6" stroke="#eeedf6" stroke-opacity=".75" stroke-width="2" paint-order="stroke" stroke-linejoin="round" >East Orange</text>
<text x="448.6" y="461.6" font-size="11" textLength="69.4" lengthAdjust="spacingAndGlyphs" fill="#8a84c6" stroke="#eeedf6" stroke-opacity=".75" stroke-width="2" paint-order="stroke" stroke-linejoin="round" >South Orange</text>
<text x="436.6" y="498" font-size="11" textLength="61.4" lengthAdjust="spacingAndGlyphs" fill="#8a84c6" stroke="#eeedf6" stroke-opacity=".75" stroke-width="2" paint-order="stroke" stroke-linejoin="round" >Maplewood</text>
<text x="505.6" y="505.4" font-size="11" textLength="51.4" lengthAdjust="spacingAndGlyphs" fill="#8a84c6" stroke="#eeedf6" stroke-opacity=".75" stroke-width="2" paint-order="stroke" stroke-linejoin="round" >Irvington</text>
<text x="614.4" y="467" font-size="11" textLength="43.6" lengthAdjust="spacingAndGlyphs" fill="#8a84c6" stroke="#eeedf6" stroke-opacity=".75" stroke-width="2" paint-order="stroke" stroke-linejoin="round" >Harrison</text>
<text x="462.4" y="561.4" font-size="13" textLength="36.2" lengthAdjust="spacingAndGlyphs" fill="#8a84c6" stroke="#eeedf6" stroke-opacity=".75" stroke-width="2" paint-order="stroke" stroke-linejoin="round" >Union</text>
<text x="511.6" y="565" font-size="11" textLength="37.8" lengthAdjust="spacingAndGlyphs" fill="#8a84c6" stroke="#eeedf6" stroke-opacity=".75" stroke-width="2" paint-order="stroke" stroke-linejoin="round" >Hillside</text>
<text x="790.4" y="471" font-size="13" textLength="51.6" lengthAdjust="spacingAndGlyphs" fill="#8a84c6" stroke="#eeedf6" stroke-opacity=".75" stroke-width="2" paint-order="stroke" stroke-linejoin="round" >Hoboken</text>
<text x="1247.4" y="281" font-size="11" textLength="63.2" lengthAdjust="spacingAndGlyphs" fill="#8a84c6" stroke="#eeedf6" stroke-opacity=".75" stroke-width="2" paint-order="stroke" stroke-linejoin="round" >Manorhaven</text>
<text x="1292.4" y="308" font-size="13" textLength="25" lengthAdjust="spacingAndGlyphs" fill="#8a84c6" stroke="#eeedf6" stroke-opacity=".75" stroke-width="2" paint-order="stroke" stroke-linejoin="round" >Port</text>
<text x="1272" y="320" font-size="13" textLength="66" lengthAdjust="spacingAndGlyphs" fill="#8a84c6" stroke="#eeedf6" stroke-opacity=".75" stroke-width="2" paint-order="stroke" stroke-linejoin="round" >Washington</text>
<text x="1301.4" y="350" font-size="11" textLength="60" lengthAdjust="spacingAndGlyphs" fill="#8a84c6" stroke="#eeedf6" stroke-opacity=".75" stroke-width="2" paint-order="stroke" stroke-linejoin="round" >Flower Hill</text>
<text x="1231.6" y="362" font-size="11" textLength="55.8" lengthAdjust="spacingAndGlyphs" fill="#8a84c6" stroke="#eeedf6" stroke-opacity=".75" stroke-width="2" paint-order="stroke" stroke-linejoin="round" >Great Neck</text>
<text x="1248.6" y="383" font-size="11" textLength="27.5" lengthAdjust="spacingAndGlyphs" fill="#8a84c6" stroke="#eeedf6" stroke-opacity=".75" stroke-width="2" paint-order="stroke" stroke-linejoin="round" >Great</text>
<text x="1233.4" y="395" font-size="11" textLength="56.6" lengthAdjust="spacingAndGlyphs" fill="#8a84c6" stroke="#eeedf6" stroke-opacity=".75" stroke-width="2" paint-order="stroke" stroke-linejoin="round" >Neck Plaza</text>
<text x="1307.6" y="400" font-size="11" textLength="60" lengthAdjust="spacingAndGlyphs" fill="#8a84c6" stroke="#eeedf6" stroke-opacity=".75" stroke-width="2" paint-order="stroke" stroke-linejoin="round" >North Hills</text>
<text x="1282.4" y="467" font-size="13" textLength="30" lengthAdjust="spacingAndGlyphs" fill="#8a84c6" stroke="#eeedf6" stroke-opacity=".75" stroke-width="2" paint-order="stroke" stroke-linejoin="round" >North</text>
<text x="1283.4" y="479" font-size="13" textLength="28" lengthAdjust="spacingAndGlyphs" fill="#8a84c6" stroke="#eeedf6" stroke-opacity=".75" stroke-width="2" paint-order="stroke" stroke-linejoin="round" >Hyde</text>
<text x="1265.4" y="510" font-size="13" textLength="60" lengthAdjust="spacingAndGlyphs" fill="#8a84c6" stroke="#eeedf6" stroke-opacity=".75" stroke-width="2" paint-order="stroke" stroke-linejoin="round" >Floral Park</text>
<text x="1263.4" y="554" font-size="13" textLength="36.6" lengthAdjust="spacingAndGlyphs" fill="#8a84c6" stroke="#eeedf6" stroke-opacity=".75" stroke-width="2" paint-order="stroke" stroke-linejoin="round" >Elmont</text>
<text x="376" y="390" font-size="11" textLength="32" lengthAdjust="spacingAndGlyphs" fill="#8a84c6" stroke="#eeedf6" stroke-opacity=".75" stroke-width="2" paint-order="stroke" stroke-linejoin="round" >ngston</text>
<text x="386" y="491" font-size="11" textLength="32.6" lengthAdjust="spacingAndGlyphs" fill="#8a84c6" stroke="#eeedf6" stroke-opacity=".75" stroke-width="2" paint-order="stroke" stroke-linejoin="round" >illburn</text>
<text x="362.5" y="547" font-size="11" textLength="56" lengthAdjust="spacingAndGlyphs" fill="#8a84c6" stroke="#eeedf6" stroke-opacity=".75" stroke-width="2" paint-order="stroke" stroke-linejoin="round" >Springfield</text>
<text x="368" y="559" font-size="11" textLength="50.6" lengthAdjust="spacingAndGlyphs" fill="#8a84c6" stroke="#eeedf6" stroke-opacity=".75" stroke-width="2" paint-order="stroke" stroke-linejoin="round" >Township</text>
<text x="587" y="488" font-size="15.5" textLength="53" lengthAdjust="spacingAndGlyphs" fill="#8580b6" stroke="#eeedf6" stroke-opacity=".6" stroke-width="2" paint-order="stroke" stroke-linejoin="round" >Newark</text>
<text x="712" y="502.4" font-size="15.5" textLength="77.6" lengthAdjust="spacingAndGlyphs" fill="#8580b6" stroke="#eeedf6" stroke-opacity=".6" stroke-width="2" paint-order="stroke" stroke-linejoin="round" >Jersey City</text>
<text x="817" y="532.6" font-size="17.3" textLength="77.2" lengthAdjust="spacingAndGlyphs" fill="#8580b6" stroke="#eeedf6" stroke-opacity=".6" stroke-width="2" paint-order="stroke" stroke-linejoin="round" >New York</text>
<text x="817" y="532.6" font-size="17.3" textLength="77.2" lengthAdjust="spacingAndGlyphs" fill="#8580b6" stroke="#8580b6" stroke-width=".45">New York</text>
<text x="1117.6" y="260" font-size="11" textLength="82.8" lengthAdjust="spacingAndGlyphs" fill="#928af0" font-style="italic" >Pelham Bay Park</text>
<text x="981.6" y="263" font-size="9" textLength="54.8" lengthAdjust="spacingAndGlyphs" fill="#b4afd6" font-style="italic" stroke="#f4f3fa" stroke-opacity=".8" stroke-width="2" paint-order="stroke" stroke-linejoin="round" >WEST BRONX</text>
<text x="1072" y="240" font-size="9" textLength="36" lengthAdjust="spacingAndGlyphs" fill="#b4afd6" font-style="italic" stroke="#f4f3fa" stroke-opacity=".8" stroke-width="2" paint-order="stroke" stroke-linejoin="round" >PELHAM</text>
<text x="1070" y="249" font-size="9" textLength="40" lengthAdjust="spacingAndGlyphs" fill="#b4afd6" font-style="italic" stroke="#f4f3fa" stroke-opacity=".8" stroke-width="2" paint-order="stroke" stroke-linejoin="round" >GARDENS</text>
<text x="1052.4" y="262.4" font-size="9" textLength="57" lengthAdjust="spacingAndGlyphs" fill="#b4afd6" font-style="italic" stroke="#f4f3fa" stroke-opacity=".8" stroke-width="2" paint-order="stroke" stroke-linejoin="round" >MORRIS PARK</text>
<text x="1010" y="340.4" font-size="9" textLength="57" lengthAdjust="spacingAndGlyphs" fill="#b4afd6" font-style="italic" stroke="#f4f3fa" stroke-opacity=".8" stroke-width="2" paint-order="stroke" stroke-linejoin="round" >HUNTS POINT</text>
<text x="1016.4" y="413.4" font-size="9" textLength="69.6" lengthAdjust="spacingAndGlyphs" fill="#b4afd6" font-style="italic" stroke="#f4f3fa" stroke-opacity=".8" stroke-width="2" paint-order="stroke" stroke-linejoin="round" >EAST ELMHURST</text>
<text x="1092" y="327" font-size="9" textLength="65" lengthAdjust="spacingAndGlyphs" fill="#b4afd6" font-style="italic" stroke="#f4f3fa" stroke-opacity=".8" stroke-width="2" paint-order="stroke" stroke-linejoin="round" >THROGGS NECK</text>
<text x="1114.4" y="378" font-size="9" textLength="54.6" lengthAdjust="spacingAndGlyphs" fill="#b4afd6" font-style="italic" stroke="#f4f3fa" stroke-opacity=".8" stroke-width="2" paint-order="stroke" stroke-linejoin="round" >WHITESTONE</text>
<text x="1203.4" y="423" font-size="9" textLength="58.2" lengthAdjust="spacingAndGlyphs" fill="#b4afd6" font-style="italic" stroke="#f4f3fa" stroke-opacity=".8" stroke-width="2" paint-order="stroke" stroke-linejoin="round" >DOUGLASTON</text>
<text x="1085.6" y="424.4" font-size="9" textLength="42.4" lengthAdjust="spacingAndGlyphs" fill="#b4afd6" font-style="italic" stroke="#f4f3fa" stroke-opacity=".8" stroke-width="2" paint-order="stroke" stroke-linejoin="round" >FLUSHING</text>
<text x="867" y="449" font-size="9" textLength="40.6" lengthAdjust="spacingAndGlyphs" fill="#b4afd6" font-style="italic" stroke="#f4f3fa" stroke-opacity=".8" stroke-width="2" paint-order="stroke" stroke-linejoin="round" >MIDTOWN</text>
<text x="828.6" y="486" font-size="9" textLength="60" lengthAdjust="spacingAndGlyphs" fill="#b4afd6" font-style="italic" stroke="#f4f3fa" stroke-opacity=".8" stroke-width="2" paint-order="stroke" stroke-linejoin="round" >WEST VILLAGE</text>
<text x="981.6" y="456.6" font-size="9" textLength="45" lengthAdjust="spacingAndGlyphs" fill="#b4afd6" font-style="italic" stroke="#f4f3fa" stroke-opacity=".8" stroke-width="2" paint-order="stroke" stroke-linejoin="round" >WOODSIDE</text>
<text x="927.6" y="465" font-size="9" textLength="22.8" lengthAdjust="spacingAndGlyphs" fill="#b4afd6" font-style="italic" stroke="#f4f3fa" stroke-opacity=".8" stroke-width="2" paint-order="stroke" stroke-linejoin="round" >LONG</text>
<text x="913" y="474" font-size="9" textLength="52.4" lengthAdjust="spacingAndGlyphs" fill="#b4afd6" font-style="italic" stroke="#f4f3fa" stroke-opacity=".8" stroke-width="2" paint-order="stroke" stroke-linejoin="round" >ISLAND CITY</text>
<text x="1015.6" y="482" font-size="9" textLength="46.4" lengthAdjust="spacingAndGlyphs" fill="#b4afd6" font-style="italic" stroke="#f4f3fa" stroke-opacity=".8" stroke-width="2" paint-order="stroke" stroke-linejoin="round" >ELMHURST</text>
<text x="979.6" y="498" font-size="9" textLength="40.8" lengthAdjust="spacingAndGlyphs" fill="#b4afd6" font-style="italic" stroke="#f4f3fa" stroke-opacity=".8" stroke-width="2" paint-order="stroke" stroke-linejoin="round" >MASPETH</text>
<text x="921.4" y="508" font-size="9" textLength="53" lengthAdjust="spacingAndGlyphs" fill="#b4afd6" font-style="italic" stroke="#f4f3fa" stroke-opacity=".8" stroke-width="2" paint-order="stroke" stroke-linejoin="round" >GREENPOINT</text>
<text x="1040.6" y="506" font-size="9" textLength="46.4" lengthAdjust="spacingAndGlyphs" fill="#b4afd6" font-style="italic" stroke="#f4f3fa" stroke-opacity=".8" stroke-width="2" paint-order="stroke" stroke-linejoin="round" >REGO PARK</text>
<text x="1060.6" y="520" font-size="9" textLength="58.8" lengthAdjust="spacingAndGlyphs" fill="#b4afd6" font-style="italic" stroke="#f4f3fa" stroke-opacity=".8" stroke-width="2" paint-order="stroke" stroke-linejoin="round" >FOREST HILLS</text>
<text x="987.4" y="534" font-size="9" textLength="51.2" lengthAdjust="spacingAndGlyphs" fill="#b4afd6" font-style="italic" stroke="#f4f3fa" stroke-opacity=".8" stroke-width="2" paint-order="stroke" stroke-linejoin="round" >RIDGEWOOD</text>
<text x="1016.4" y="557" font-size="9" textLength="43.6" lengthAdjust="spacingAndGlyphs" fill="#b4afd6" font-style="italic" stroke="#f4f3fa" stroke-opacity=".8" stroke-width="2" paint-order="stroke" stroke-linejoin="round" >GLENDALE</text>
<text x="956.6" y="566" font-size="9" textLength="44.8" lengthAdjust="spacingAndGlyphs" fill="#b4afd6" font-style="italic" stroke="#f4f3fa" stroke-opacity=".8" stroke-width="2" paint-order="stroke" stroke-linejoin="round" >BUSHWICK</text>
<text x="1082.4" y="563" font-size="9" textLength="66.2" lengthAdjust="spacingAndGlyphs" fill="#b4afd6" font-style="italic" stroke="#f4f3fa" stroke-opacity=".8" stroke-width="2" paint-order="stroke" stroke-linejoin="round" >RICHMOND HILL</text>
<text x="899.4" y="579" font-size="9" textLength="99" lengthAdjust="spacingAndGlyphs" fill="#b4afd6" font-style="italic" stroke="#f4f3fa" stroke-opacity=".8" stroke-width="2" paint-order="stroke" stroke-linejoin="round" >BEDFORD-STUYVESANT</text>
<text x="1226.4" y="437" font-size="9" textLength="51.6" lengthAdjust="spacingAndGlyphs" fill="#b4afd6" font-style="italic" stroke="#f4f3fa" stroke-opacity=".8" stroke-width="2" paint-order="stroke" stroke-linejoin="round" >LITTLE NECK</text>
<text x="1188.4" y="442" font-size="9" textLength="35" lengthAdjust="spacingAndGlyphs" fill="#b4afd6" font-style="italic" stroke="#f4f3fa" stroke-opacity=".8" stroke-width="2" paint-order="stroke" stroke-linejoin="round" >BAYSIDE</text>
<text x="1115" y="490" font-size="9" textLength="43.6" lengthAdjust="spacingAndGlyphs" fill="#b4afd6" font-style="italic" stroke="#f4f3fa" stroke-opacity=".8" stroke-width="2" paint-order="stroke" stroke-linejoin="round" >POMONOK</text>
<text x="1170.4" y="486" font-size="9" textLength="27.2" lengthAdjust="spacingAndGlyphs" fill="#b4afd6" font-style="italic" stroke="#f4f3fa" stroke-opacity=".8" stroke-width="2" paint-order="stroke" stroke-linejoin="round" >FRESH</text>
<text x="1162.4" y="495" font-size="9" textLength="43.6" lengthAdjust="spacingAndGlyphs" fill="#b4afd6" font-style="italic" stroke="#f4f3fa" stroke-opacity=".8" stroke-width="2" paint-order="stroke" stroke-linejoin="round" >MEADOWS</text>
<text x="1135.4" y="514" font-size="9" textLength="45.2" lengthAdjust="spacingAndGlyphs" fill="#b4afd6" font-style="italic" stroke="#f4f3fa" stroke-opacity=".8" stroke-width="2" paint-order="stroke" stroke-linejoin="round" >HILLCREST</text>
<text x="1204.4" y="525" font-size="9" textLength="71.6" lengthAdjust="spacingAndGlyphs" fill="#b4afd6" font-style="italic" stroke="#f4f3fa" stroke-opacity=".8" stroke-width="2" paint-order="stroke" stroke-linejoin="round" >QUEENS VILLAGE</text>
<text x="1152.4" y="550" font-size="9" textLength="37.6" lengthAdjust="spacingAndGlyphs" fill="#b4afd6" font-style="italic" stroke="#f4f3fa" stroke-opacity=".8" stroke-width="2" paint-order="stroke" stroke-linejoin="round" >JAMAICA</text>
<text x="385" y="462" font-size="9" textLength="42" lengthAdjust="spacingAndGlyphs" fill="#b4afd6" font-style="italic" stroke="#f4f3fa" stroke-opacity=".8" stroke-width="2" paint-order="stroke" stroke-linejoin="round" >RT HILLS</text>
<text x="1040" y="278" font-size="11.5" textLength="41.4" lengthAdjust="spacingAndGlyphs" fill="#b4afd6" font-style="italic" stroke="#f4f3fa" stroke-opacity=".8" stroke-width="2" paint-order="stroke" stroke-linejoin="round" fill="#a8a2d0">BRONX</text>
<text x="1033.6" y="459.6" font-size="12" textLength="48.8" lengthAdjust="spacingAndGlyphs" fill="#b4afd6" font-style="italic" stroke="#f4f3fa" stroke-opacity=".8" stroke-width="2" paint-order="stroke" stroke-linejoin="round" fill="#a8a2d0">QUEENS</text>
<text x="1182" y="574" font-size="9" textLength="45" lengthAdjust="spacingAndGlyphs" fill="#b4afd6" font-style="italic" stroke="#f4f3fa" stroke-opacity=".8" stroke-width="2" paint-order="stroke" stroke-linejoin="round" fill-opacity=".45">ST ALBANS</text>
<text x="785.7" y="233.2" font-size="9.5" font-weight="bold" fill="#8f83f5" textLength="34" lengthAdjust="spacingAndGlyphs">express</text>
<text transform="translate(801.5,599.6) rotate(-62.3)" font-size="10" font-style="italic" fill="#a49ddb" textLength="57" lengthAdjust="spacingAndGlyphs">Hudson River</text>
<rect x="614.5" y="270.5" width="17" height="13" rx="6.5" fill="#fff" stroke="#aaa" stroke-width="1"/><text x="623" y="280.3" font-size="9" text-anchor="middle" fill="#777">3</text>
<rect x="651.1" y="344.5" width="17" height="13" rx="6.5" fill="#fff" stroke="#aaa" stroke-width="1"/><text x="659.6" y="354.3" font-size="9" text-anchor="middle" fill="#777">21</text>
<rect x="676.5" y="346.1" width="17" height="13" rx="6.5" fill="#fff" stroke="#aaa" stroke-width="1"/><text x="685" y="355.90000000000003" font-size="9" text-anchor="middle" fill="#777">17</text>
<rect x="675.0" y="414.5" width="16" height="13" rx="6.5" fill="#fff" stroke="#aaa" stroke-width="1"/><text x="683" y="424.3" font-size="9" text-anchor="middle" fill="#777">7</text>
<rect x="467.6" y="504.5" width="22" height="13" rx="6.5" fill="#fff" stroke="#aaa" stroke-width="1"/><text x="478.6" y="514.3" font-size="9" text-anchor="middle" fill="#777">124</text>
<rect x="714.6" y="513.5" width="22" height="13" rx="6.5" fill="#fff" stroke="#aaa" stroke-width="1"/><text x="725.6" y="523.3" font-size="9" text-anchor="middle" fill="#777">440</text>
<rect x="702.4" y="544.5" width="22" height="13" rx="6.5" fill="#fff" stroke="#aaa" stroke-width="1"/><text x="713.4" y="554.3" font-size="9" text-anchor="middle" fill="#777">440</text>
<rect x="1132.6" y="423.5" width="22" height="13" rx="6.5" fill="#fff" stroke="#aaa" stroke-width="1"/><text x="1143.6" y="433.3" font-size="9" text-anchor="middle" fill="#777">25A</text>
<rect x="1171.5" y="520.5" width="17" height="13" rx="6.5" fill="#fff" stroke="#aaa" stroke-width="1"/><text x="1180" y="530.3" font-size="9" text-anchor="middle" fill="#777">25</text>
<rect x="536.5" y="579.5" width="17" height="13" rx="6.5" fill="#fff" stroke="#aaa" stroke-width="1"/><text x="545" y="589.3" font-size="9" text-anchor="middle" fill="#777">27</text>
<path d="M784,244 q3.5,1.6 7,-0.5 q3.5,2.1 7,0.5 q1.6,5 -0.4,7.5 q1.6,5.5 -6.6,7.5 q-8.2,-2 -6.6,-7.5 q-2,-2.5 -0.4,-7.5 z" fill="#fff" stroke="#aaa" stroke-width="1"/><text x="791" y="254.6" font-size="9" text-anchor="middle" fill="#777">46</text>
<path d="M647.4,498 q3.5,1.6 7,-0.5 q3.5,2.1 7,0.5 q1.6,5 -0.4,7.5 q1.6,5.5 -6.6,7.5 q-8.2,-2 -6.6,-7.5 q-2,-2.5 -0.4,-7.5 z" fill="#fff" stroke="#aaa" stroke-width="1"/><text x="654.4" y="508.6" font-size="9" text-anchor="middle" fill="#777">1</text>
<path d="M392,570 q3.5,1.6 7,-0.5 q3.5,2.1 7,0.5 q1.6,5 -0.4,7.5 q1.6,5.5 -6.6,7.5 q-8.2,-2 -6.6,-7.5 q-2,-2.5 -0.4,-7.5 z" fill="#fff" stroke="#aaa" stroke-width="1"/><text x="399" y="580.6" font-size="9" text-anchor="middle" fill="#777">22</text>
<path d="M490.7,376.3 h21 l-1,3.2 c1.5,5 -2,10 -9.5,12.3 c-7.5,-2.3 -11.0,-7.3 -9.5,-12.3 z" fill="#a89ee6"/><rect x="490.7" y="376.0" width="21" height="1" fill="#fff" opacity=".9"/><text x="501.2" y="387.40000000000003" font-size="9" font-weight="bold" text-anchor="middle" fill="#fff" textLength="15" lengthAdjust="spacingAndGlyphs">280</text>
<path d="M434.4,516.5 h16 l-1,3.2 c1.5,5 -2,10 -7.0,12.3 c-5.0,-2.3 -8.5,-7.3 -7.0,-12.3 z" fill="#a89ee6"/><rect x="434.4" y="516.2" width="16" height="1" fill="#fff" opacity=".9"/><text x="442.4" y="527.6" font-size="9" font-weight="bold" text-anchor="middle" fill="#fff" textLength="10" lengthAdjust="spacingAndGlyphs">78</text>
<path d="M505.4,535.5 h16 l-1,3.2 c1.5,5 -2,10 -7.0,12.3 c-5.0,-2.3 -8.5,-7.3 -7.0,-12.3 z" fill="#a89ee6"/><rect x="505.4" y="535.2" width="16" height="1" fill="#fff" opacity=".9"/><text x="513.4" y="546.6" font-size="9" font-weight="bold" text-anchor="middle" fill="#fff" textLength="10" lengthAdjust="spacingAndGlyphs">78</text>
<path d="M613.0,523.5 h16 l-1,3.2 c1.5,5 -2,10 -7.0,12.3 c-5.0,-2.3 -8.5,-7.3 -7.0,-12.3 z" fill="#a89ee6"/><rect x="613.0" y="523.2" width="16" height="1" fill="#fff" opacity=".9"/><text x="621" y="534.6" font-size="9" font-weight="bold" text-anchor="middle" fill="#fff" textLength="10" lengthAdjust="spacingAndGlyphs">78</text>
<path d="M821.0,490.9 h16 l-1,3.2 c1.5,5 -2,10 -7.0,12.3 c-5.0,-2.3 -8.5,-7.3 -7.0,-12.3 z" fill="#a89ee6"/><rect x="821.0" y="490.59999999999997" width="16" height="1" fill="#fff" opacity=".9"/><text x="829" y="502.0" font-size="9" font-weight="bold" text-anchor="middle" fill="#fff" textLength="10" lengthAdjust="spacingAndGlyphs">78</text>
<path d="M839.1,566.1 h21 l-1,3.2 c1.5,5 -2,10 -9.5,12.3 c-7.5,-2.3 -11.0,-7.3 -9.5,-12.3 z" fill="#a89ee6"/><rect x="839.1" y="565.8000000000001" width="21" height="1" fill="#fff" opacity=".9"/><text x="849.6" y="577.2" font-size="9" font-weight="bold" text-anchor="middle" fill="#fff" textLength="15" lengthAdjust="spacingAndGlyphs">478</text>
<path d="M895.5,553.5 h21 l-1,3.2 c1.5,5 -2,10 -9.5,12.3 c-7.5,-2.3 -11.0,-7.3 -9.5,-12.3 z" fill="#a89ee6"/><rect x="895.5" y="553.2" width="21" height="1" fill="#fff" opacity=".9"/><text x="906" y="564.6" font-size="9" font-weight="bold" text-anchor="middle" fill="#fff" textLength="15" lengthAdjust="spacingAndGlyphs">278</text>
<path d="M1058.0,288.5 h16 l-1,3.2 c1.5,5 -2,10 -7.0,12.3 c-5.0,-2.3 -8.5,-7.3 -7.0,-12.3 z" fill="#a89ee6"/><rect x="1058.0" y="288.2" width="16" height="1" fill="#fff" opacity=".9"/><text x="1066" y="299.6" font-size="9" font-weight="bold" text-anchor="middle" fill="#fff" textLength="10" lengthAdjust="spacingAndGlyphs">95</text>
<path d="M1037.5,305.5 h21 l-1,3.2 c1.5,5 -2,10 -9.5,12.3 c-7.5,-2.3 -11.0,-7.3 -9.5,-12.3 z" fill="#a89ee6"/><rect x="1037.5" y="305.2" width="21" height="1" fill="#fff" opacity=".9"/><text x="1048" y="316.6" font-size="9" font-weight="bold" text-anchor="middle" fill="#fff" textLength="15" lengthAdjust="spacingAndGlyphs">278</text>
<path d="M1118.1,298.5 h21 l-1,3.2 c1.5,5 -2,10 -9.5,12.3 c-7.5,-2.3 -11.0,-7.3 -9.5,-12.3 z" fill="#a89ee6"/><rect x="1118.1" y="298.2" width="21" height="1" fill="#fff" opacity=".9"/><text x="1128.6" y="309.6" font-size="9" font-weight="bold" text-anchor="middle" fill="#fff" textLength="15" lengthAdjust="spacingAndGlyphs">695</text>
<path d="M1153.1,337.5 h21 l-1,3.2 c1.5,5 -2,10 -9.5,12.3 c-7.5,-2.3 -11.0,-7.3 -9.5,-12.3 z" fill="#a89ee6"/><rect x="1153.1" y="337.2" width="21" height="1" fill="#fff" opacity=".9"/><text x="1163.6" y="348.6" font-size="9" font-weight="bold" text-anchor="middle" fill="#fff" textLength="15" lengthAdjust="spacingAndGlyphs">295</text>
<path d="M1103.9,397.5 h21 l-1,3.2 c1.5,5 -2,10 -9.5,12.3 c-7.5,-2.3 -11.0,-7.3 -9.5,-12.3 z" fill="#a89ee6"/><rect x="1103.9" y="397.2" width="21" height="1" fill="#fff" opacity=".9"/><text x="1114.4" y="408.6" font-size="9" font-weight="bold" text-anchor="middle" fill="#fff" textLength="15" lengthAdjust="spacingAndGlyphs">678</text>
<path d="M986.1,474.1 h21 l-1,3.2 c1.5,5 -2,10 -9.5,12.3 c-7.5,-2.3 -11.0,-7.3 -9.5,-12.3 z" fill="#a89ee6"/><rect x="986.1" y="473.8" width="21" height="1" fill="#fff" opacity=".9"/><text x="996.6" y="485.20000000000005" font-size="9" font-weight="bold" text-anchor="middle" fill="#fff" textLength="15" lengthAdjust="spacingAndGlyphs">278</text>
<path d="M1117.5,533.1 h21 l-1,3.2 c1.5,5 -2,10 -9.5,12.3 c-7.5,-2.3 -11.0,-7.3 -9.5,-12.3 z" fill="#a89ee6"/><rect x="1117.5" y="532.8000000000001" width="21" height="1" fill="#fff" opacity=".9"/><text x="1128" y="544.2" font-size="9" font-weight="bold" text-anchor="middle" fill="#fff" textLength="15" lengthAdjust="spacingAndGlyphs">678</text>
<path d="M1192.9,456.9 h21 l-1,3.2 c1.5,5 -2,10 -9.5,12.3 c-7.5,-2.3 -11.0,-7.3 -9.5,-12.3 z" fill="#a89ee6"/><rect x="1192.9" y="456.59999999999997" width="21" height="1" fill="#fff" opacity=".9"/><text x="1203.4" y="468.0" font-size="9" font-weight="bold" text-anchor="middle" fill="#fff" textLength="15" lengthAdjust="spacingAndGlyphs">495</text>
<circle cx="1159" cy="241" r="6" fill="#fff" stroke="#444" stroke-width="1.3"/><path d="M1159,236.5 l3.2,4 h-1.6 l2,2.6 h-2.8 v1.8 h-1.6 v-1.8 h-2.8 l2,-2.6 h-1.6 z" fill="#7b6cf0"/>
<g><rect x="409.5" y="238.5" width="17" height="32" rx="2" fill="#fff" stroke="#c9c9d4" stroke-width="1"/><circle cx="418" cy="245.5" r="3" fill="#f4b400" stroke="#c98a00" stroke-width=".6"/><path d="M414,249.5 q4,-1.5 8,0 l-.6,8.5 h-1.2 l-.5,9 h-3.4 l-.5,-9 h-1.2 z" fill="#f4b400" stroke="#c98a00" stroke-width=".6"/><path d="M415.2,249.6 h5.6 l-2.8,3.6 z" fill="#e8574a"/></g>
<g><rect x="409.5" y="282.5" width="17" height="33" rx="2" fill="#fff" stroke="#c9c9d4" stroke-width="1"/><rect x="410" y="300" width="16" height="1" fill="#e0e0e6"/><path d="M414,291 h8 M418,287 v8 M414.4,308 h7.2" stroke="#666" stroke-width="1.8" fill="none"/></g>
<g font-size="11"><rect x="1217.5" y="237" width="89.5" height="18" rx="1.5" fill="#fff" stroke="#c6c6d0" stroke-width="1"/><rect x="1253" y="237" width="1" height="18" fill="#d0d0d8"/><rect x="1218" y="255.3" width="89" height="1" fill="#000" opacity=".18"/><text x="1235.3" y="249.6" text-anchor="middle" font-weight="bold" fill="#111">Map</text><text x="1280" y="249.6" text-anchor="middle" fill="#555" textLength="40" lengthAdjust="spacingAndGlyphs">Satellite</text></g>
<text x="405" y="572.6" font-family="Liberation Serif, serif" font-size="18" fill="#fff" stroke="#8f8d9e" stroke-opacity=".5" stroke-width="1.8" paint-order="stroke" textLength="56" lengthAdjust="spacingAndGlyphs">Google</text>
<rect x="1024" y="570" width="289" height="13" fill="#f5f4fa" opacity=".72"/>
<g font-size="10" fill="#444"><text x="1029" y="579" textLength="108.4" lengthAdjust="spacingAndGlyphs">Map data ©2015 Google</text><text x="1149.6" y="579" font-weight="bold" textLength="59.4" lengthAdjust="spacingAndGlyphs">Terms of Use</text><text x="1222" y="579" font-weight="bold" textLength="84" lengthAdjust="spacingAndGlyphs">Report a map error</text></g>
<defs><linearGradient id="og" x1="0" y1="0" x2="0" y2="1"><stop offset="0" stop-color="#f57213"/><stop offset="1" stop-color="#f68b27"/></linearGradient><linearGradient id="rg" x1="0" y1="0" x2="0" y2="1"><stop offset="0" stop-color="#f76d63"/><stop offset="1" stop-color="#e2352b"/></linearGradient><radialGradient id="cl"><stop offset=".5" stop-color="#2f9bff" stop-opacity=".9"/><stop offset=".55" stop-color="#6fb6ff" stop-opacity=".75"/><stop offset=".78" stop-color="#8cc4ff" stop-opacity=".6"/><stop offset="1" stop-color="#b6d8ff" stop-opacity=".35"/></radialGradient></defs>
<g transform="translate(569,329)"><path d="M5.5,25 h16 l-8,14.2 z" fill="#f07b18" stroke="#b9560c" stroke-width=".7"/><rect x="0.4" y="0.4" width="25.4" height="25.4" rx="3.6" fill="url(#og)" stroke="#b2560f" stroke-width="1"/><path d="M4.2,13.5 C7,11 9,8.5 11.5,6.8 C14,5 17,4.800 19,6.600 C20.2,7.700 21.200,9.200 21.800,10.400 C20,9.300 18,8.300 16,8.600 C13.500,9 11.500,11.500 9,13.600 C7.500,14.600 5.600,14.300 4.200,13.500 Z" fill="#fff"/><path d="M21.400,13 C18.600,15.500 16.600,18 14.100,19.700 C11.600,21.500 8.600,21.700 6.600,19.900 C5.400,18.800 4.400,17.300 3.800,16.100 C5.600,17.200 7.600,18.200 9.600,17.900 C12.100,17.500 14.100,15 16.600,12.900 C18.100,11.900 20,12.200 21.400,13 Z" fill="#fff"/></g>
<g transform="translate(938,224.5)"><path d="M5.5,25 h16 l-8,14.2 z" fill="#f07b18" stroke="#b9560c" stroke-width=".7"/><rect x="0.4" y="0.4" width="25.4" height="25.4" rx="3.6" fill="url(#og)" stroke="#b2560f" stroke-width="1"/><path d="M4.2,13.5 C7,11 9,8.5 11.5,6.8 C14,5 17,4.800 19,6.600 C20.2,7.700 21.200,9.200 21.800,10.400 C20,9.300 18,8.300 16,8.600 C13.500,9 11.500,11.500 9,13.600 C7.500,14.600 5.600,14.300 4.200,13.500 Z" fill="#fff"/><path d="M21.400,13 C18.600,15.500 16.600,18 14.100,19.700 C11.600,21.500 8.600,21.700 6.600,19.900 C5.400,18.800 4.400,17.300 3.800,16.100 C5.600,17.200 7.600,18.200 9.600,17.900 C12.100,17.500 14.100,15 16.600,12.900 C18.100,11.900 20,12.200 21.400,13 Z" fill="#fff"/></g>
<g transform="translate(762.3,451)"><path d="M5.5,25 h16 l-8,14.2 z" fill="#f07b18" stroke="#b9560c" stroke-width=".7"/><rect x="0.4" y="0.4" width="25.4" height="25.4" rx="3.6" fill="url(#og)" stroke="#b2560f" stroke-width="1"/><path d="M4.2,13.5 C7,11 9,8.5 11.5,6.8 C14,5 17,4.800 19,6.600 C20.2,7.700 21.200,9.200 21.800,10.400 C20,9.300 18,8.300 16,8.600 C13.500,9 11.500,11.500 9,13.600 C7.500,14.600 5.600,14.300 4.200,13.500 Z" fill="#fff"/><path d="M21.400,13 C18.600,15.500 16.600,18 14.100,19.700 C11.600,21.500 8.600,21.700 6.600,19.900 C5.400,18.800 4.400,17.300 3.800,16.100 C5.600,17.200 7.600,18.200 9.600,17.900 C12.100,17.500 14.100,15 16.600,12.900 C18.100,11.900 20,12.200 21.400,13 Z" fill="#fff"/></g>
<circle cx="843.8" cy="542.6" r="26" fill="#cfe4ff" opacity=".35"/><circle cx="843.8" cy="542.6" r="15.3" fill="none" stroke="#3d9ff5" stroke-opacity="0.8" stroke-width="3.6" stroke-dasharray="17.03 2.2" transform="rotate(-80 843.8 542.6)"/><circle cx="843.8" cy="542.6" r="20" fill="none" stroke="#3d9ff5" stroke-opacity="0.5" stroke-width="3.6" stroke-dasharray="22.53 2.6" transform="rotate(-80 843.8 542.6)"/><circle cx="843.8" cy="542.6" r="24.3" fill="none" stroke="#3d9ff5" stroke-opacity="0.28" stroke-width="3" stroke-dasharray="27.54 3" transform="rotate(-80 843.8 542.6)"/><circle cx="843.8" cy="542.6" r="12.3" fill="#0c8df7"/><text x="843.8" y="546.6" font-size="11" font-weight="bold" text-anchor="middle" fill="#111">5</text>
<path d="M855,525 c-1,-7 -4,-12 -7.500,-17 c-2.300,-3.300 -3.500,-6 -3.500,-10 a11,11 0 0 1 22,0 c0,4 -1.200,6.700 -3.500,10 c-3.500,5 -6.500,10 -7.500,17 z" fill="url(#rg)" stroke="#b3261e" stroke-width=".8"/><circle cx="855" cy="497.500" r="3.600" fill="#6b1410"/>
<g><path d="M725.5,267.500 h263 a2,2 0 0 1 2,2 v164.500 a2,2 0 0 1 -2,2 h-122.500 l-9,20 l-9,-20 h-122.500 a2,2 0 0 1 -2,-2 v-164.500 a2,2 0 0 1 2,-2 z" fill="#000" opacity=".16" transform="translate(0,1.500)"/><path d="M725.5,267.500 h263 a2,2 0 0 1 2,2 v164.500 a2,2 0 0 1 -2,2 h-122.500 l-9,20 l-9,-20 h-122.500 a2,2 0 0 1 -2,-2 v-164.500 a2,2 0 0 1 2,-2 z" fill="#fff" stroke="#b9b9c4" stroke-width="1"/><path d="M965.4,281.400 l8,8 M973.400,281.400 l-8,8" stroke="#868686" stroke-width="1.500" fill="none"/><text x="738" y="287.600" font-size="12" font-weight="bold" fill="#333" textLength="80.600" lengthAdjust="spacingAndGlyphs">THE GARDENS</text><text x="738" y="310" font-size="13" fill="#555" textLength="159.600" lengthAdjust="spacingAndGlyphs">96 Avenue Of The Americas,</text><text x="738" y="329" font-size="13" fill="#555" textLength="116" lengthAdjust="spacingAndGlyphs">New York, NY 10010</text><text x="738" y="349" font-size="13" fill="#555" textLength="34" lengthAdjust="spacingAndGlyphs">Email:</text><text x="775.400" y="349" font-size="13" font-weight="bold" fill="#e8603c" textLength="114.600" lengthAdjust="spacingAndGlyphs">sample@email.com</text><rect x="741.500" y="364.500" width="211" height="29" rx="4" fill="#ffd8d8" stroke="#7d7d7d" stroke-width="1"/><rect x="743" y="393.800" width="208" height="1" fill="#000" opacity=".2"/><text x="759.500" y="386.300" font-size="16.500" font-weight="bold" fill="#3c3c48" textLength="177" lengthAdjust="spacingAndGlyphs">CONTACT THIS STORE</text><text x="759.500" y="384.800" font-size="16.500" font-weight="bold" fill="#d9c3c5" textLength="177" lengthAdjust="spacingAndGlyphs">CONTACT THIS STORE</text><g font-size="12" font-weight="bold" fill="#e8603c"><text x="738" y="418" textLength="64.400" lengthAdjust="spacingAndGlyphs">Street view</text><text x="812" y="418" textLength="63" lengthAdjust="spacingAndGlyphs">Zoom here</text><text x="884.400" y="418" textLength="59.600" lengthAdjust="spacingAndGlyphs">Directions</text></g><g font-size="12" fill="#666"><text x="805.800" y="418">|</text><text x="878" y="418">|</text></g></g>
</svg>
<svg id="arrows" style="position:absolute;left:0;top:0;pointer-events:none" width="1360" height="1272" viewBox="0 0 1360 1272">
<polygon points="460.5,282.0 450.5,281.4 455.4,273.3" fill="#22ee90"/>
<path d="M234.4,143.5 L459.6,281.4" fill="none" stroke="#fb9a0c" stroke-width="2.25"/>
<path d="M450.5,281.4 L460.5,282.0 L455.4,273.3" fill="none" stroke="#fb9a0c" stroke-width="2.2" stroke-linejoin="miter"/>
<polygon points="408.6,199.8 400.2,205.2 399.4,195.9" fill="#22ee90"/>
<path d="M234.4,213.8 L407.6,199.9" fill="none" stroke="#fb9a0c" stroke-width="2.25"/>
<path d="M400.2,205.2 L408.6,199.8 L399.4,195.9" fill="none" stroke="#fb9a0c" stroke-width="2.2" stroke-linejoin="miter"/>
<polygon points="393.8,102.6 391.5,112.3 384.5,106.1" fill="#22ee90"/>
<path d="M243.2,273.5 L393.1,103.3" fill="none" stroke="#fb9a0c" stroke-width="2.25"/>
<path d="M391.5,112.3 L393.8,102.6 L384.5,106.1" fill="none" stroke="#fb9a0c" stroke-width="2.2" stroke-linejoin="miter"/>
<polygon points="383.5,165.1 381.4,174.9 374.3,168.8" fill="#22ee90"/>
<path d="M234.4,342 L382.9,165.8" fill="none" stroke="#fb9a0c" stroke-width="2.25"/>
<path d="M381.4,174.9 L383.5,165.1 L374.3,168.8" fill="none" stroke="#fb9a0c" stroke-width="2.2" stroke-linejoin="miter"/>
<polygon points="396.5,614.8 387.3,610.9 394.5,605.0" fill="#22ee90"/>
<path d="M234.4,415.6 L395.8,614.0" fill="none" stroke="#fb9a0c" stroke-width="2.25"/>
<path d="M387.3,610.9 L396.5,614.8 L394.5,605.0" fill="none" stroke="#fb9a0c" stroke-width="2.2" stroke-linejoin="miter"/>
<polygon points="419.8,739.1 410.9,734.6 418.5,729.2" fill="#22ee90"/>
<path d="M234.4,474.4 L419.2,738.3" fill="none" stroke="#fb9a0c" stroke-width="2.25"/>
<path d="M410.9,734.6 L419.8,739.1 L418.5,729.2" fill="none" stroke="#fb9a0c" stroke-width="2.2" stroke-linejoin="miter"/>
<polygon points="419.9,946.6 411.9,940.5 420.5,936.6" fill="#22ee90"/>
<path d="M234.4,540.9 L419.4,945.7" fill="none" stroke="#fb9a0c" stroke-width="2.25"/>
<path d="M411.9,940.5 L419.9,946.6 L420.5,936.6" fill="none" stroke="#fb9a0c" stroke-width="2.2" stroke-linejoin="miter"/>
<polygon points="461.1,817.1 451.4,814.5 457.8,807.6" fill="#22ee90"/>
<path d="M234.4,607.6 L460.3,816.4" fill="none" stroke="#fb9a0c" stroke-width="2.25"/>
<path d="M451.4,814.5 L461.1,817.1 L457.8,807.6" fill="none" stroke="#fb9a0c" stroke-width="2.2" stroke-linejoin="miter"/>
<polygon points="454.5,858.8 444.8,856.7 450.8,849.5" fill="#22ee90"/>
<path d="M234.4,671.8 L453.8,858.2" fill="none" stroke="#fb9a0c" stroke-width="2.25"/>
<path d="M444.8,856.7 L454.5,858.8 L450.8,849.5" fill="none" stroke="#fb9a0c" stroke-width="2.2" stroke-linejoin="miter"/>
<polygon points="1280.1,625.1 1271.8,630.7 1270.8,621.3" fill="#22ee90"/>
<path d="M221.2,734.1 L1279.1,625.2" fill="none" stroke="#fb9a0c" stroke-width="2.25"/>
<path d="M1271.8,630.7 L1280.1,625.1 L1270.8,621.3" fill="none" stroke="#fb9a0c" stroke-width="2.2" stroke-linejoin="miter"/>
<polygon points="745.6,377.7 741.8,387.0 735.8,379.8" fill="#22ee90"/>
<path d="M234.6,800 L744.8,378.4" fill="none" stroke="#fb9a0c" stroke-width="2.25"/>
<path d="M741.8,387.0 L745.6,377.7 L735.8,379.8" fill="none" stroke="#fb9a0c" stroke-width="2.2" stroke-linejoin="miter"/>
<polygon points="844.9,385.9 840.8,395.1 835.0,387.7" fill="#22ee90"/>
<path d="M234.6,866.1 L844.1,386.5" fill="none" stroke="#fb9a0c" stroke-width="2.25"/>
<path d="M840.8,395.1 L844.9,385.9 L835.0,387.7" fill="none" stroke="#fb9a0c" stroke-width="2.2" stroke-linejoin="miter"/>
<polygon points="733.0,205.5 731.9,215.4 724.1,210.1" fill="#22ee90"/>
<path d="M234.6,932 L732.4,206.3" fill="none" stroke="#fb9a0c" stroke-width="2.25"/>
<path d="M731.9,215.4 L733.0,205.5 L724.1,210.1" fill="none" stroke="#fb9a0c" stroke-width="2.2" stroke-linejoin="miter"/>
<polygon points="780.0,196.8 778.9,206.7 771.1,201.4" fill="#22ee90"/>
<path d="M234.6,994.1 L779.4,197.6" fill="none" stroke="#fb9a0c" stroke-width="2.25"/>
<path d="M778.9,206.7 L780.0,196.8 L771.1,201.4" fill="none" stroke="#fb9a0c" stroke-width="2.2" stroke-linejoin="miter"/>
<polygon points="418.8,1039.7 410.5,1045.3 409.5,1036.0" fill="#22ee90"/>
<path d="M234.2,1059.8 L417.8,1039.8" fill="none" stroke="#fb9a0c" stroke-width="2.25"/>
<path d="M410.5,1045.3 L418.8,1039.7 L409.5,1036.0" fill="none" stroke="#fb9a0c" stroke-width="2.2" stroke-linejoin="miter"/>
<polygon points="426.9,1115.8 418.1,1120.5 418.0,1111.2" fill="#22ee90"/>
<path d="M234.2,1116.8 L425.9,1115.8" fill="none" stroke="#fb9a0c" stroke-width="2.25"/>
<path d="M418.1,1120.5 L426.9,1115.8 L418.0,1111.2" fill="none" stroke="#fb9a0c" stroke-width="2.2" stroke-linejoin="miter"/>
</svg>
</body>
</html>
